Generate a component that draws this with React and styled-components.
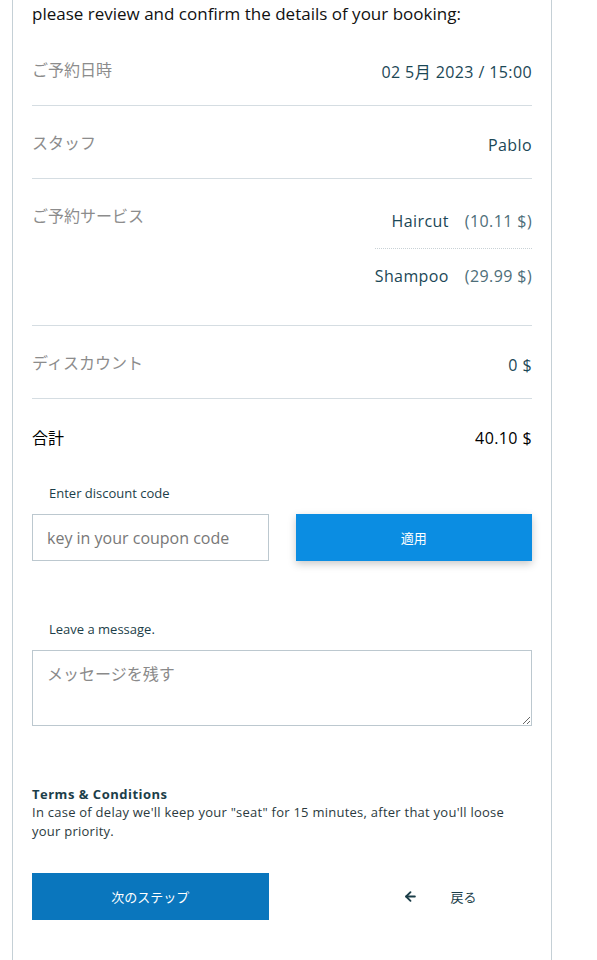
import styled, { createGlobalStyle } from "styled-components";
import { ArrowLeft } from "lucide-react";

const GlobalStyle = createGlobalStyle`
  body {
    margin: 0;
    background: #fff;
    font-family: "Open Sans", "Noto Sans CJK JP", sans-serif;
  }
`;

const Card = styled.div`
  box-sizing: border-box;
  width: 540px;
  min-height: 960px;
  margin-left: 12px;
  padding: 2px 19px 40px;
  border-left: 1px solid #c5d0d6;
  border-right: 1px solid #c5d0d6;
`;

const Heading = styled.div`
  font-size: 17px;
  line-height: 24px;
  color: #111;
  margin-bottom: 32px;
`;

const Row = styled.div`
  display: flex;
  justify-content: space-between;
  align-items: flex-start;
  padding: 0 0 21px;
  margin-bottom: ${(p) => (p.last ? 0 : 25)}px;
  border-bottom: ${(p) => (p.last ? "none" : "1px solid #d5dde2")};
`;

const Label = styled.div`
  font-size: 16px;
  line-height: 24px;
  padding-top: ${(p) => p.offset || 0}px;
  color: ${(p) => (p.strong ? "#000" : "#8c8c8c")};
`;

const Value = styled.div`
  font-size: 16px;
  line-height: 24px;
  padding-top: 2px;
  letter-spacing: 0.4px;
  color: ${(p) => (p.strong ? "#000" : "#1b4756")};
`;

const ServiceList = styled.div`
  display: flex;
  flex-direction: column;
`;

const ServiceItem = styled.div`
  display: flex;
  justify-content: flex-end;
  gap: 16px;
  font-size: 16px;
  line-height: 24px;
  letter-spacing: 0.4px;
  color: #1b4756;
  padding: ${(p) => (p.first ? "5px 0 15px" : "15px 0 16px")};
  border-bottom: ${(p) => (p.first ? "1px dotted #c9d2d6" : "none")};
`;

const Price = styled.span`
  color: #4e6e79;
`;

const FieldLabel = styled.div`
  font-size: 13px;
  line-height: 18px;
  color: #1c3e49;
  padding-left: 17px;
  margin: ${(p) => p.top}px 0 12px;
`;

const Pair = styled.div`
  display: grid;
  grid-template-columns: 1fr 1fr;
  gap: 27px;
`;

const Input = styled.input`
  box-sizing: border-box;
  height: 47px;
  width: 100%;
  padding: 0 14px;
  border: 1px solid #bcc8cf;
  font-family: inherit;
  font-size: 16px;
  color: #333;
  outline: none;
  &::placeholder {
    color: #787878;
  }
`;

const Button = styled.button`
  height: 47px;
  border: none;
  color: #fff;
  font-family: inherit;
  font-size: 13px;
  background: ${(p) => p.bg};
  box-shadow: ${(p) => (p.raised ? "0 3px 8px rgba(0, 0, 0, 0.22)" : "none")};
  cursor: pointer;
`;

const TextArea = styled.textarea`
  display: block;
  box-sizing: border-box;
  width: 100%;
  height: 76px;
  padding: 10px 14px;
  border: 1px solid #bcc8cf;
  font-family: inherit;
  font-size: 16px;
  outline: none;
  &::placeholder {
    color: #8a8a8a;
  }
`;

const Terms = styled.div`
  margin-top: 59px;
  font-size: 13px;
  line-height: 19px;
  letter-spacing: 0.25px;
  color: #2b3a40;
`;

const TermsTitle = styled.div`
  font-weight: 700;
  color: #1c3e49;
  letter-spacing: 0.5px;
  line-height: 18px;
`;

const Actions = styled(Pair)`
  margin-top: 32px;
`;

const BackLink = styled.button`
  display: flex;
  align-items: center;
  gap: 33px;
  padding: 0 0 0 107px;
  border: none;
  background: none;
  font-family: inherit;
  font-size: 13px;
  color: #1c3e49;
  cursor: pointer;
`;

const App = () => {
  return (
    <>
      <GlobalStyle />
      <Card>
        <Heading>please review and confirm the details of your booking:</Heading>
        <Row>
          <Label>ご予約日時</Label>
          <Value>02 5月 2023 / 15:00</Value>
        </Row>
        <Row>
          <Label>スタッフ</Label>
          <Value>Pablo</Value>
        </Row>
        <Row>
          <Label>ご予約サービス</Label>
          <ServiceList>
            <ServiceItem first>
              <span>Haircut</span>
              <Price>(10.11 $)</Price>
            </ServiceItem>
            <ServiceItem>
              <span>Shampoo</span>
              <Price>(29.99 $)</Price>
            </ServiceItem>
          </ServiceList>
        </Row>
        <Row>
          <Label>ディスカウント</Label>
          <Value>0 $</Value>
        </Row>
        <Row last>
          <Label strong offset={2}>合計</Label>
          <Value strong>40.10 $</Value>
        </Row>

        <FieldLabel top={13}>Enter discount code</FieldLabel>
        <Pair>
          <Input placeholder="key in your coupon code" />
          <Button bg="#0b8de2" raised>適用</Button>
        </Pair>

        <FieldLabel top={59}>Leave a message.</FieldLabel>
        <TextArea placeholder="メッセージを残す" />

        <Terms>
          <TermsTitle>Terms &amp; Conditions</TermsTitle>
          In case of delay we'll keep your "seat" for 15 minutes, after that you'll loose
          your priority.
        </Terms>

        <Actions>
          <Button bg="#0a76bd">次のステップ</Button>
          <BackLink>
            <ArrowLeft size={15} strokeWidth={3} />
            戻る
          </BackLink>
        </Actions>
      </Card>
    </>
  );
};

export default App;
